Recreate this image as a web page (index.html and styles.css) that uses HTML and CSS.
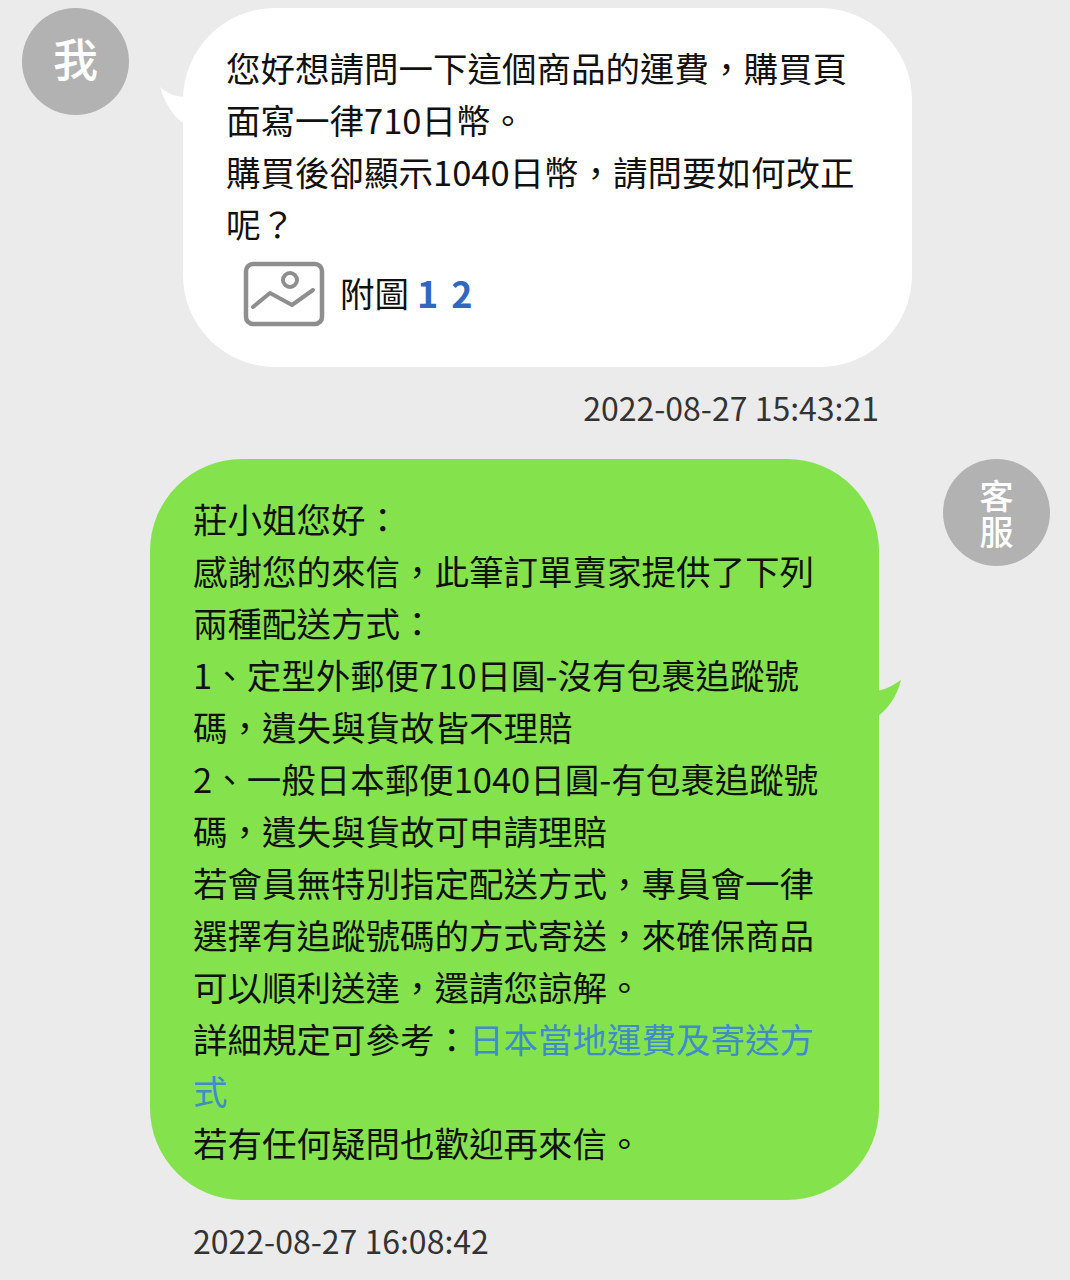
FILE: index.html
```html
<!DOCTYPE html>
<html lang="zh-Hant">
<head>
  <meta charset="UTF-8">
  <title>客服訊息</title>
  <link rel="stylesheet" href="styles.css">
</head>
<body>
  <div class="chat">
    <div class="row row-me">
      <div class="avatar avatar-me">我</div>
      <div class="bubble bubble-me">
        <svg class="tail tail-me" width="26" height="38" viewBox="0 0 26 38"><path d="M0 0C7 6 15 10 26 10V38C13 30 5 16 0 0Z" fill="#fff"/></svg>
        <p class="msg">您好想請問一下這個商品的運費，購買頁<br>面寫一律710日幣。<br>購買後卻顯示1040日幣，請問要如何改正<br>呢？</p>
        <div class="attach">
          <svg class="pic-icon" width="82" height="66" viewBox="0 0 82 66" fill="none" stroke="#8e8e8e" stroke-width="4" stroke-linecap="round" stroke-linejoin="round">
            <rect x="3" y="3" width="76" height="60" rx="7" stroke-width="4.5"/>
            <circle cx="47" cy="19" r="7"/>
            <path d="M10 46L27 32L49 44L70 29"/>
          </svg>
          <span class="attach-label">附圖</span>
          <a class="num">1</a>
          <a class="num">2</a>
        </div>
      </div>
    </div>
    <div class="time time-me">2022-08-27 15:43:21</div>

    <div class="row row-cs">
      <div class="bubble bubble-cs">
        <svg class="tail tail-cs" width="26" height="38" viewBox="0 0 26 38"><path d="M26 0C20 4 11 10 0 11V38C13 30 22 16 26 0Z" fill="#84e34d"/></svg>
        <p class="msg">莊小姐您好：<br>感謝您的來信，此筆訂單賣家提供了下列<br>兩種配送方式：<br>1、定型外郵便710日圓-沒有包裹追蹤號<br>碼，遺失與貨故皆不理賠<br>2、一般日本郵便1040日圓-有包裹追蹤號<br>碼，遺失與貨故可申請理賠<br>若會員無特別指定配送方式，專員會一律<br>選擇有追蹤號碼的方式寄送，來確保商品<br>可以順利送達，還請您諒解。<br>詳細規定可參考：<a class="link">日本當地運費及寄送方<br>式</a><br>若有任何疑問也歡迎再來信。</p>
      </div>
      <div class="avatar avatar-cs">客<br>服</div>
    </div>
    <div class="time time-cs">2022-08-27 16:08:42</div>
  </div>
</body>
</html>
```

FILE: styles.css
```css
html, body { margin: 0; height: 1280px; overflow: hidden; }
body { background: #ebebeb; color: #111; font-family: "Noto Sans CJK TC", "Noto Sans", sans-serif; }
.chat { padding-top: 8px; }
.row { display: flex; align-items: flex-start; }
.row-me { padding-left: 22px; gap: 54px; }
.row-cs { padding-left: 150px; gap: 64px; margin-top: 30px; }
.avatar {
  width: 107px; height: 107px; border-radius: 50%; background: #b2b2b2; color: #fff;
  display: flex; align-items: center; justify-content: center; text-align: center; flex-shrink: 0;
}
.avatar-me { font-size: 45px; font-weight: 500; padding-bottom: 8px; box-sizing: border-box; }
.avatar-cs { font-size: 34px; line-height: 36px; font-weight: 500; }
.bubble { position: relative; width: 729px; border-radius: 92px; box-sizing: border-box; }
.bubble-me { background: #fff; height: 359px; padding: 33px 43px 0; }
.bubble-cs { background: #84e34d; height: 741px; padding: 33px 43px 0; }
.tail { position: absolute; }
.tail-me { left: -23px; top: 79px; }
.tail-cs { right: -22px; top: 221px; }
.msg { margin: 0; font-size: 34.5px; line-height: 52px; white-space: nowrap; }
.attach { display: flex; align-items: center; margin-top: 10px; padding-left: 17px; font-size: 34.5px; line-height: 66px; }
.pic-icon { margin-right: 15px; }
.attach-label { margin-bottom: 4px; }
.num { color: #2f68bd; font-weight: 700; margin-left: 8px; margin-bottom: 4px; font-size: 36px; }
.num + .num { margin-left: 13px; }
.link { color: #3f8cc9; }
.time { font-size: 32px; line-height: 44px; color: #333; }
.time-me { margin-top: 18px; padding-right: 191px; text-align: right; }
.time-cs { margin-top: 18px; padding-left: 193px; }
```
